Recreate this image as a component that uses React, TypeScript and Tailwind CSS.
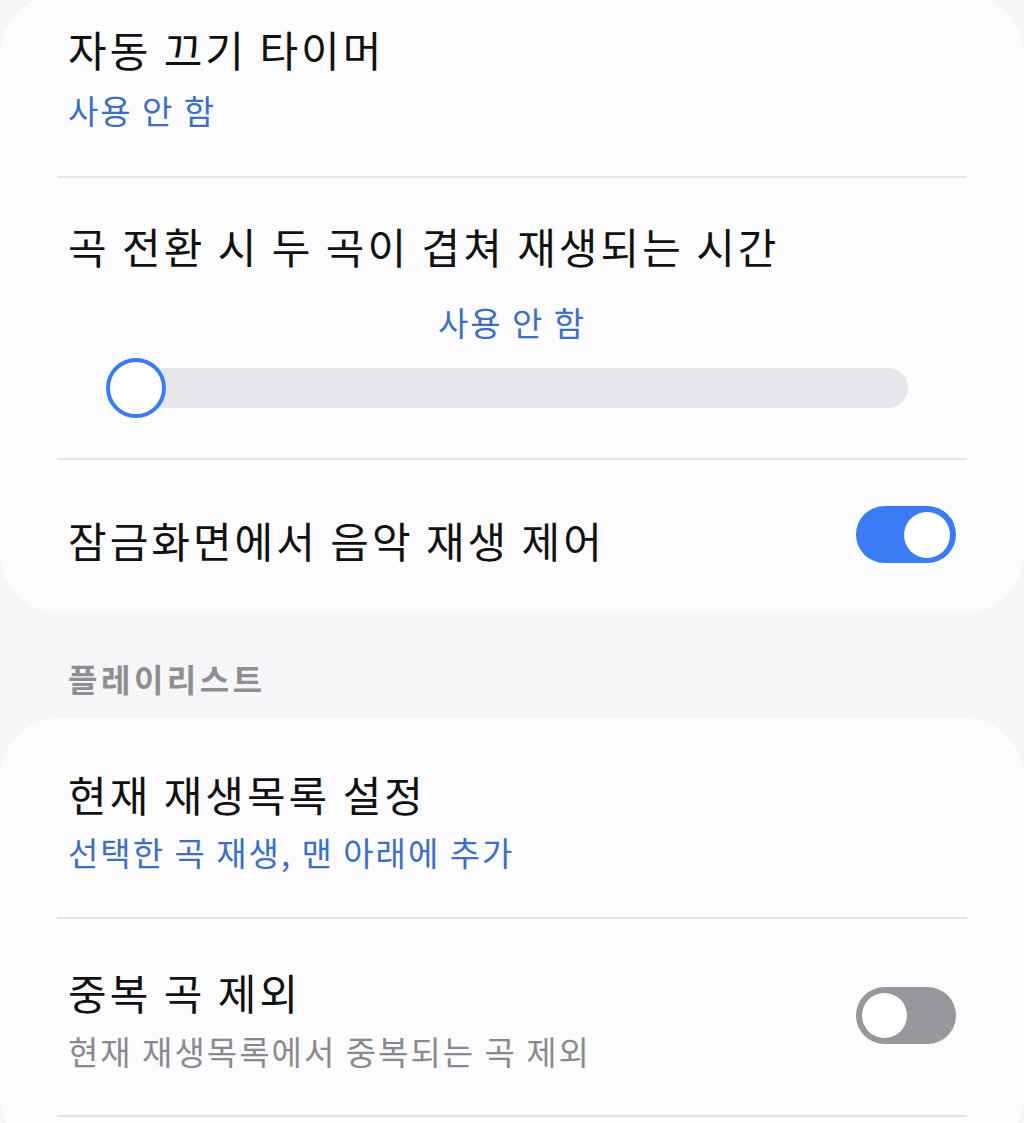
import React from "react";

const font = { fontFamily: '"Noto Sans CJK KR", "Noto Sans", sans-serif' };

const Toggle = ({ on }: { on: boolean }) =>
  on ? (
    <div className="flex h-[57px] w-[100px] shrink-0 items-center justify-end rounded-full bg-[#3b7cf6] pr-[6px]">
      <div className="h-[46px] w-[46px] rounded-full bg-white" />
    </div>
  ) : (
    <div className="flex h-[57px] w-[100px] shrink-0 items-center justify-start rounded-full bg-[#98989c] pl-[6px]">
      <div className="h-[45px] w-[45px] rounded-full bg-white" />
    </div>
  );

const Divider = () => <div className="h-[2px] bg-[#e4e4e7]" />;

export default function App() {
  return (
    <div
      className="h-[1123px] w-[1024px] overflow-hidden bg-[#f6f6f8]"
      style={font}
    >
      {/* 상단 카드 */}
      <div className="-mt-[5px] rounded-[60px] bg-[#fcfcfe] px-[57px]">
        {/* 자동 끄기 타이머 */}
        <div className="pl-[11px] pt-[29px] pb-[46px]">
          <p className="text-[42px] leading-[50px] tracking-[3px] text-[#111111]">
            자동 끄기 타이머
          </p>
          <p className="mt-[16px] text-[33px] leading-[40px] tracking-[2px] text-[#3d6fc2]">
            사용 안 함
          </p>
        </div>
        <Divider />

        {/* 크로스페이드 */}
        <div className="pt-[43px] pb-[40px]">
          <p className="pl-[11px] text-[42px] leading-[50px] tracking-[3px] text-[#111111]">
            곡 전환 시 두 곡이 겹쳐 재생되는 시간
          </p>
          <p className="mt-[31px] text-center text-[33px] leading-[40px] tracking-[2px] text-[#3d6fc2]">
            사용 안 함
          </p>
          <div className="relative ml-[49px] mr-[59px] mt-[16px] flex h-[60px] items-center">
            <div className="h-[40px] flex-1 rounded-full bg-[#e6e6ea]" />
            <div className="absolute left-0 top-0 h-[60px] w-[60px] rounded-full border-[4px] border-[#3b7cf6] bg-white" />
          </div>
        </div>
        <Divider />

        {/* 잠금화면 */}
        <div className="flex h-[153px] items-center justify-between pl-[11px] pr-[11px]">
          <p className="pt-[6px] text-[42px] leading-[50px] tracking-[3px] text-[#111111]">
            잠금화면에서 음악 재생 제어
          </p>
          <div className="-mt-[4px]">
            <Toggle on />
          </div>
        </div>
      </div>

      {/* 플레이리스트 헤더 */}
      <div className="px-[68px] pt-[45px] pb-[20px]">
        <p className="text-[32px] font-bold leading-[40px] tracking-[3.5px] text-[#8e8e93]">
          플레이리스트
        </p>
      </div>

      {/* 하단 카드 */}
      <div className="rounded-[60px] bg-[#fcfcfe] px-[57px]">
        <div className="pl-[11px] pt-[51px] pb-[45px]">
          <p className="text-[42px] leading-[50px] tracking-[3px] text-[#111111]">
            현재 재생목록 설정
          </p>
          <p className="mt-[13px] text-[33px] leading-[40px] tracking-[2px] text-[#3d6fc2]">
            선택한 곡 재생, 맨 아래에 추가
          </p>
        </div>
        <Divider />

        <div className="flex items-center justify-between pl-[11px] pr-[11px] pt-[48px] pb-[44px]">
          <div>
            <p className="text-[42px] leading-[50px] tracking-[3px] text-[#111111]">
              중복 곡 제외
            </p>
            <p className="mt-[14px] text-[33px] leading-[40px] tracking-[2px] text-[#8a8a8e]">
              현재 재생목록에서 중복되는 곡 제외
            </p>
          </div>
          <div className="-mt-[8px]">
            <Toggle on={false} />
          </div>
        </div>
        <Divider />
        <div className="h-[40px]" />
      </div>
    </div>
  );
}
